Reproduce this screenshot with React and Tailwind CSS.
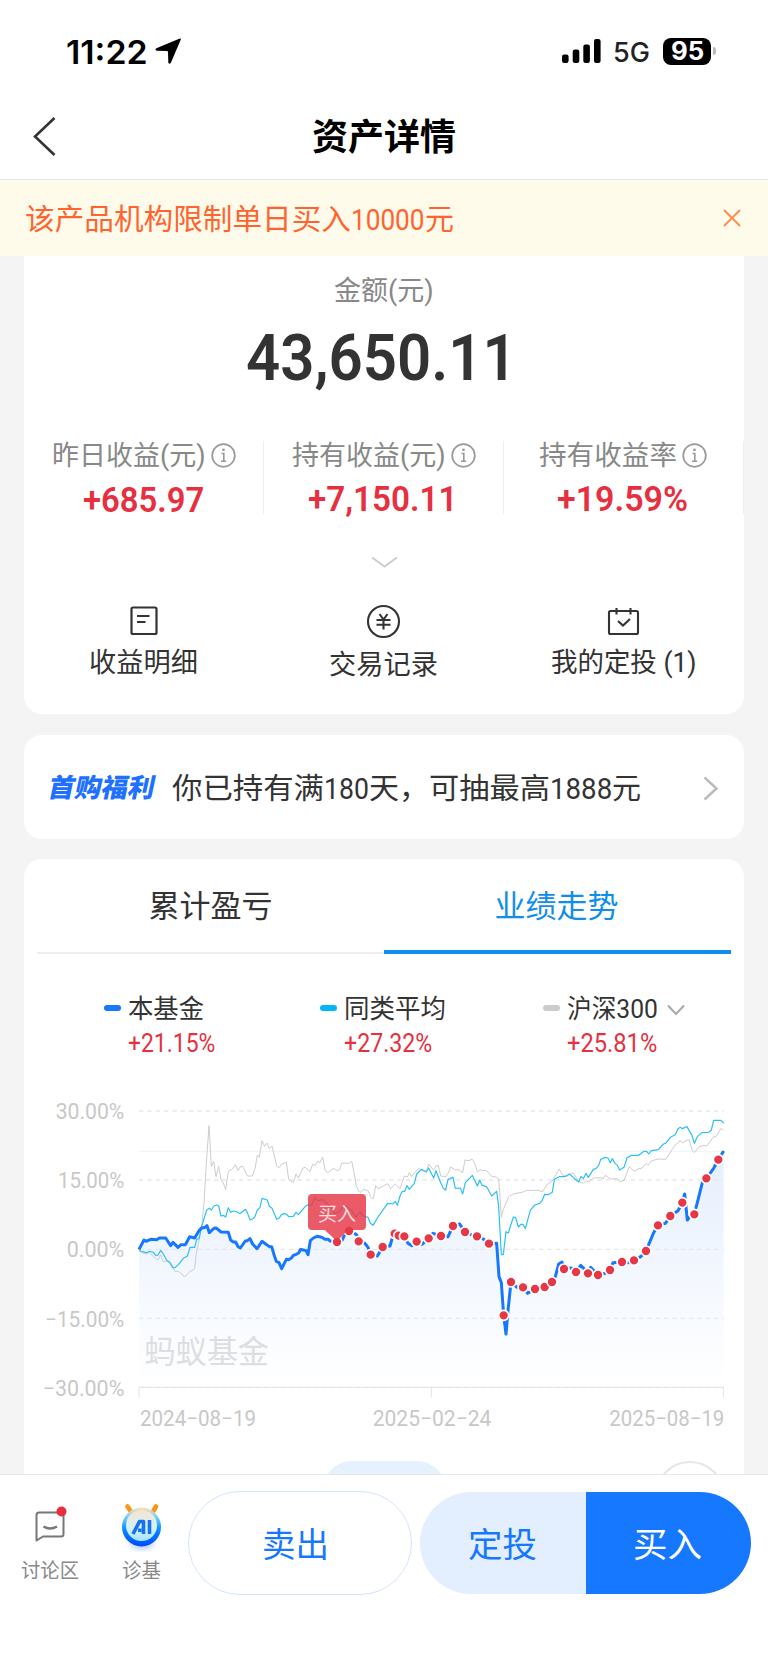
import { useLayoutEffect, useRef } from 'react';

// Text squeezed or stretched horizontally to fill the width of its box.
function Fit({ className = '', children }) {
  const box = useRef(null);
  const inner = useRef(null);
  useLayoutEffect(() => {
    const natural = inner.current.offsetWidth;
    const target = box.current.clientWidth;
    if (natural && target) inner.current.style.transform = `scaleX(${target / natural})`;
  }, []);
  return (
    <span ref={box} className={`block shrink-0 whitespace-nowrap ${className}`}>
      <span ref={inner} className="inline-block origin-left align-top">{children}</span>
    </span>
  );
}

const L = 1104;
const own = [[417,508],[432,480],[438,484],[452,478],[470,479],[478,474],[497,474],[512,497],[519,487],[534,502],[543,494],[556,494],[569,470],[584,474],[597,452],[606,443],[614,443],[621,437],[628,458],[643,444],[650,445],[663,456],[685,457],[692,480],[700,486],[707,486],[714,500],[721,504],[736,483],[742,482],[750,476],[758,492],[771,506],[786,484],[800,494],[808,500],[815,500],[822,524],[829,544],[837,548],[845,566],[859,538],[866,539],[874,534],[880,526],[888,523],[896,519],[902,508],[910,510],[918,512],[924,524],[931,482],[940,474],[951,469],[965,472],[975,478],[985,478],[990,483],[1011,486],[1026,482],[1032,468],[1047,453],[1060,458],[1070,464],[1076,484],[1092,488],[1098,494],[1104,502],[1112,523],
  ...[[28,528],[44,501],[66,498],[74,470],[80,461],[92,467],[109,469],[120,490],[132,497],[146,485],[162,493],[182,475],[195,460],[219,468],[240,470],[255,438],[275,432],[291,456],[310,464],[327,469],[348,478],[363,491],[386,490],[393,590],[400,608],[407,706],[414,762],[420,692],[429,606],[447,622],[465,622],[479,640],[501,627],[530,621],[552,606],[562,590],[572,552],[582,546],[588,567],[610,564],[624,576],[638,556],[650,568],[660,580],[668,562],[690,585],[712,580],[726,570],[735,548],[762,546],[785,548],[798,541],[818,530],[834,513],[857,458],[870,436],[892,430],[907,408],[930,392],[943,368],[950,342],[958,420],[964,412],[979,403],[1003,308],[1015,295],[1037,265],[1042,255],[1051,239],[1067,213]].map(([x, y]) => [x + L, y])];
const peers = [[417,508],[422,514],[440,518],[448,514],[458,516],[468,527],[474,525],[482,511],[490,522],[500,541],[508,546],[518,563],[526,562],[536,553],[550,535],[562,529],[570,502],[584,502],[590,478],[597,476],[605,440],[620,390],[628,385],[634,390],[642,378],[650,375],[656,378],[663,408],[670,406],[677,411],[685,383],[692,397],[700,393],[712,396],[720,401],[736,388],[742,398],[750,420],[758,416],[764,412],[772,390],[780,383],[786,355],[802,360],[808,379],[816,385],[830,418],[838,414],[844,404],[852,401],[859,402],[866,410],[880,409],[888,397],[895,404],[903,395],[916,379],[925,374],[935,375],[945,352],[955,362],[968,359],[978,368],[990,378],[1003,400],[1015,398],[1030,378],[1040,380],[1055,392],[1068,411],[1080,396],[1090,408],
  ...[[0,412],[7,430],[15,436],[30,411],[44,391],[59,370],[74,372],[82,364],[88,376],[96,348],[103,334],[110,334],[117,317],[124,328],[139,310],[146,282],[160,268],[175,276],[182,264],[197,294],[204,272],[218,308],[226,325],[233,330],[240,298],[255,292],[262,325],[277,324],[284,342],[292,308],[313,286],[328,318],[335,300],[342,316],[356,320],[371,348],[386,334],[392,380],[400,524],[406,524],[414,455],[421,459],[436,411],[443,413],[451,441],[458,433],[465,433],[472,446],[487,391],[500,375],[515,370],[523,361],[530,343],[540,344],[553,337],[559,298],[574,290],[590,290],[604,282],[620,296],[632,306],[639,289],[646,296],[654,280],[661,292],[676,268],[684,266],[692,256],[698,238],[712,232],[720,234],[727,248],[733,236],[741,250],[748,256],[755,270],[768,262],[777,234],[790,226],[812,226],[828,214],[836,214],[842,222],[850,212],[871,209],[886,192],[893,190],[907,172],[922,164],[930,146],[937,142],[943,146],[957,140],[965,154],[972,166],[979,190],[988,170],[1002,158],[1022,157],[1030,150],[1037,121],[1059,121],[1067,130]].map(([x, y]) => [x + L, y])];
const index300 = [[417,508],[430,520],[440,522],[448,516],[460,530],[474,540],[482,524],[490,546],[498,543],[512,547],[525,574],[535,574],[554,590],[570,574],[580,570],[584,565],[590,512],[598,478],[605,440],[612,370],[619,250],[627,137],[634,260],[641,244],[648,290],[656,259],[663,299],[670,309],[677,329],[685,274],[698,266],[706,254],[714,272],[721,260],[728,258],[742,288],[757,288],[765,266],[772,225],[778,232],[786,182],[794,199],[801,189],[808,206],[816,198],[830,258],[837,263],[845,252],[859,247],[866,298],[880,308],[888,282],[895,294],[909,264],[916,262],[930,275],[938,253],[946,256],[953,243],[960,248],[968,231],[975,270],[983,278],[1000,265],[1012,272],[1018,270],[1026,249],[1048,250],[1055,243],[1062,278],[1069,318],[1077,335],[1083,337],[1090,328],[1098,330],
  ...[[0,332],[10,354],[16,356],[23,317],[30,326],[44,319],[59,311],[68,326],[82,312],[96,326],[109,288],[118,291],[124,278],[131,290],[139,278],[153,265],[160,272],[175,274],[182,252],[196,270],[204,258],[211,256],[218,288],[234,290],[240,280],[248,261],[262,270],[270,268],[284,278],[291,240],[300,242],[313,238],[320,250],[328,276],[336,270],[356,272],[371,289],[385,291],[392,298],[396,350],[400,412],[407,385],[415,368],[422,350],[436,342],[465,336],[475,331],[512,331],[523,336],[538,312],[552,304],[560,290],[574,267],[582,284],[596,290],[612,278],[620,284],[632,304],[646,310],[654,302],[661,306],[676,294],[698,293],[705,297],[712,286],[727,297],[748,296],[755,305],[768,301],[784,260],[798,274],[812,266],[820,266],[835,250],[841,256],[849,243],[871,237],[893,238],[922,194],[928,191],[936,181],[943,189],[957,180],[964,180],[972,210],[979,218],[994,200],[1008,196],[1016,198],[1037,170],[1044,170],[1059,145],[1067,151]].map(([x, y]) => [x + L, y])];
const buys = [[1047,453],[1076,484],[1112,524],
  ...[[44,501],[80,461],[92,467],[109,469],[146,485],[182,475],[219,468],[255,438],[291,456],[327,469],[363,491],[407,706],[429,606],[465,622],[501,627],[530,621],[552,606],[588,567],[624,576],[660,580],[690,585],[726,570],[762,546],[798,541],[834,513],[870,436],[907,408],[943,368],[979,403],[1015,295],[1051,239]].map(([x, y]) => [x + L, y]), [1011,486]];

const toLine = (pts) => pts.map((p) => p.join(',')).join(' ');

function Chart() {
  return (
    <svg className="block h-[378px] w-[720px] shrink-0" viewBox="72 0 2160 1134" fontFamily="Roboto, 'Noto Sans CJK SC', sans-serif">
      <defs>
        <linearGradient id="area" gradientUnits="userSpaceOnUse" x1="0" y1="213" x2="0" y2="922">
          <stop offset="0" stopColor="#1764e8" stopOpacity="0.11" />
          <stop offset="0.5" stopColor="#1a6cf0" stopOpacity="0.055" />
          <stop offset="1" stopColor="#1677ff" stopOpacity="0" />
        </linearGradient>
      </defs>
      <polygon points={`417,922 ${toLine(own)} 2171,922`} fill="url(#area)" />
      <g stroke="#e6e7ea" strokeWidth="4" strokeDasharray="13 12">
        {[93, 300, 508, 715, 922].map((y) => <line key={y} x1="417" x2="2171" y1={y} y2={y} />)}
      </g>
      <line x1="417" x2="2171" y1="214" y2="214" stroke="#edf3fd" strokeWidth="3" />
      <path d="M417 952V922H2170V952M1294 922V952" fill="none" stroke="#e2e3e5" strokeWidth="3" />
      <g fill="#c8c8c8" fontSize="66" textAnchor="end">
        <text x="373" y="117" textLength="206" lengthAdjust="spacingAndGlyphs">30.00%</text>
        <text x="373" y="325" textLength="199" lengthAdjust="spacingAndGlyphs">15.00%</text>
        <text x="373" y="532" textLength="173" lengthAdjust="spacingAndGlyphs">0.00%</text>
        <text x="373" y="740" textLength="238" lengthAdjust="spacingAndGlyphs">−15.00%</text>
        <text x="373" y="948" textLength="245" lengthAdjust="spacingAndGlyphs">−30.00%</text>
      </g>
      <g fill="#c8c8c8" fontSize="66">
        <text x="420" y="1038" textLength="348" lengthAdjust="spacingAndGlyphs">2024−08−19</text>
        <text x="1118" y="1038" textLength="356" lengthAdjust="spacingAndGlyphs">2025−02−24</text>
        <text x="1828" y="1038" textLength="345" lengthAdjust="spacingAndGlyphs">2025−08−19</text>
      </g>
      <text x="433" y="850" fontSize="94" fill="#dcdee1" textLength="374" lengthAdjust="spacingAndGlyphs">蚂蚁基金</text>
      <g fill="none" strokeLinejoin="round">
        <polyline points={toLine(index300)} stroke="#cdcdcd" strokeWidth="3" />
        <polyline points={toLine(peers)} stroke="#2cc0f7" strokeWidth="3.6" />
        <polyline points={toLine(own)} stroke="#1677ff" strokeWidth="9" />
      </g>
      <g fill="#e63746" stroke="#ffffff" strokeWidth="5">
        {buys.map(([x, y]) => <circle key={x} cx={x} cy={y} r="15" />)}
      </g>
      <path d="M936 342H1086Q1098 342 1098 354V438Q1098 450 1086 450H1044L1011 484L974 450H936Q924 450 924 438V354Q924 342 936 342Z" fill="#e73746" fillOpacity="0.82" />
      <text x="1011" y="423" fontSize="57" fill="#ffdfe2" textAnchor="middle">买入</text>
    </svg>
  );
}

function Info() {
  return (
    <svg className="mt-[2px] size-[25px] shrink-0" viewBox="0 0 25 25" fill="none" stroke="#999" strokeWidth="1.7">
      <circle cx="12.5" cy="12.5" r="11.3" />
      <path d="M10.5 10.5H12.8V18M10 18.2H15.2" strokeWidth="1.6" />
      <circle cx="12.5" cy="6.8" r="1.4" fill="#999" stroke="none" />
    </svg>
  );
}

function Stat({ label, labelW, value, valueW, pad, lower }) {
  return (
    <div className="flex h-[73px] w-60 flex-col items-center border-r border-[#eeeeee]">
      <div className={`flex h-[27px] items-center ${pad}`}>
        <Fit className={`mt-[3px] text-[27px] leading-[27px] text-[#888888] ${labelW}`}>{label}</Fit>
        <Info />
      </div>
      <Fit className={`text-[35px] leading-[38px] font-semibold text-[#e62f3f] ${lower} ${valueW}`}>{value}</Fit>
    </div>
  );
}

function Action({ icon, label, width, gap }) {
  return (
    <div className="flex w-60 flex-col items-center">
      <div className="flex h-9 items-center">{icon}</div>
      <Fit className={`-ml-[1px] text-[27px] leading-[30px] text-[#333333] ${gap} ${width}`}>{label}</Fit>
    </div>
  );
}

function Legend({ color, label, labelW, value, valueW, left, arrow }) {
  return (
    <div className={`flex ${left}`}>
      <span className={`mt-[13px] mr-[7px] h-[6px] w-[17px] rounded-[3px] ${color}`} />
      <div>
        <div className="flex h-[34px] items-center">
          <Fit className={`text-[26px] leading-[34px] text-[#333333] ${labelW}`}>{label}</Fit>
          {arrow && (
            <svg className="mt-[2px] ml-[9px] h-3 w-[18px]" viewBox="0 0 18 12" fill="none" stroke="#aaaaaa" strokeWidth="2">
              <path d="M1 1.5L9 10L17 1.5" />
            </svg>
          )}
        </div>
        <Fit className={`mt-[2px] text-[25px] leading-[32px] text-[#e62f3f] ${valueW}`}>{value}</Fit>
      </div>
    </div>
  );
}

export default function App() {
  return (
    <div className="flex h-[1663px] w-[768px] flex-col overflow-hidden bg-[#f4f4f4] font-[Roboto,'Noto_Sans_CJK_SC',sans-serif]">
      <header className="shrink-0 bg-white">
        <div className="flex h-[102px] items-center pl-[66px] pr-[52px]">
          <Fit className="mt-px w-[82px] font-[Inter,sans-serif] text-[33px] leading-[40px] font-semibold text-black">11:22</Fit>
          <svg className="ml-[7px] size-[26px]" viewBox="0 0 26 26"><path d="M24.2.7Q26.6-.3 25.6 2L16 24.4Q14.500 27 13.300 24.400L13 14.200Q13 13 11.800 13L1.800 12.800Q-.8 11.800 1.400 10.200Z" fill="#000" /></svg>
          <svg className="ml-auto h-[24px] w-[39px]" viewBox="0 0 39 24"><rect y="15.500" width="6.600" height="8.500" rx="2.200" /><rect x="10.700" y="10.500" width="6.600" height="13.500" rx="2.200" /><rect x="21.300" y="5.500" width="6.600" height="18.500" rx="2.200" /><rect x="32" y="0" width="6.600" height="24" rx="2.200" /></svg>
          <Fit className="mt-[3px] ml-[12px] w-[37px] font-[Inter,sans-serif] text-[27px] leading-[40px] font-medium text-[#222222]">5G</Fit>
          <div className="ml-[13px] flex h-[27px] w-[48px] items-center justify-center rounded-[8px] bg-black">
            <Fit className="w-[33px] font-[Inter,sans-serif] text-[25px] leading-[27px] font-bold text-white">95</Fit>
          </div>
          <span className="ml-[2px] h-[8px] w-[3px] rounded-r-full bg-[#bbbbbb]" />
        </div>
        <div className="flex h-[78px] items-start border-b border-[#e8e8e8] pt-[14px]">
          <svg className="ml-[33px] h-10 w-[23px]" viewBox="0 0 23 40" fill="none" stroke="#333333" strokeWidth="2.600"><path d="M21.500 2L2 20.500L21.500 39" /></svg>
          <Fit className="ml-[256px] w-[144px] text-[36px] leading-[44px] font-semibold text-black">资产详情</Fit>
        </div>
      </header>
      <div className="flex h-[76px] shrink-0 items-center bg-[#fefbea] pl-[25px] text-[29px] leading-[40px] text-[#ff6430]">
        <Fit className="mt-[4px] w-[326px]">该产品机构限制单日买入</Fit>
        <Fit className="mt-[4px] w-[74px]">10000</Fit>
        <Fit className="mt-[4px] w-[29px]">元</Fit>
        <svg className="ml-[269px] size-[18px]" viewBox="0 0 18 18" stroke="#ff8a50" strokeWidth="1.800"><path d="M1 1L17 17M17 1L1 17" /></svg>
      </div>

      <main className="flex h-[1218px] shrink-0 flex-col gap-[21px] px-6">
        <section className="flex h-[458px] shrink-0 flex-col rounded-b-[18px] bg-white">
          <Fit className="mt-[15px] ml-[310px] w-[100px] text-[27px] leading-[40px] text-[#888888]">金额(元)</Fit>
          <Fit className="mt-[17px] ml-[222px] w-[271px] text-[65px] leading-[60px] font-semibold text-[#333333]">43,650.11</Fit>
          <div className="mt-[53px] flex">
            <Stat label="昨日收益(元)" labelW="mr-[5px] w-[154px]" value="+685.97" valueW="w-[121px]" pad="-mr-[1px]" lower="mt-[14px] -ml-[1px]" />
            <Stat label="持有收益(元)" labelW="mr-[5px] w-[154px]" value="+7,150.11" valueW="w-[149px]" pad="-mr-[1px]" lower="mt-[13px] -ml-[2px]" />
            <Stat label="持有收益率" labelW="mr-[5px] w-[138px]" value="+19.59%" valueW="w-[131px]" pad="mr-[1px]" lower="mt-[13px] -ml-[3px]" />
          </div>
          <svg className="mt-[42px] ml-[347px] h-3 w-[27px]" viewBox="0 0 27 12" fill="none" stroke="#cccccc" strokeWidth="2"><path d="M1 1.500L13.500 10.500L26 1.500" /></svg>
          <div className="mt-[35px] flex">
            <Action width="w-[109px]" gap="mt-[9px]" label="收益明细" icon={
              <svg className="size-9" viewBox="0 0 36 36" fill="none" stroke="#333333" strokeWidth="2.200"><rect x="5.500" y="4.500" width="25" height="26.500" rx="1.500" /><path d="M11 13H23.500M11 19H19.500" /></svg>} />
            <Action width="w-[109px]" gap="mt-[11px]" label="交易记录" icon={
              <svg className="size-9" viewBox="0 0 36 36" fill="none" stroke="#333333" strokeWidth="2.100"><circle cx="17.500" cy="18.500" r="15.500" /><path d="M13.500 11L17.500 16.500L21.500 11M17.500 16.500V26.500M10.500 17H24.500M10.500 21.800H24.500" /></svg>} />
            <Action width="w-[146px]" gap="mt-[9px]" label="我的定投 (1)" icon={
              <svg className="size-9" viewBox="0 0 36 36" fill="none" stroke="#333333" strokeWidth="2.100"><rect x="3" y="8" width="29" height="23" rx="1.500" /><path d="M10.500 5V11.500M24.500 5V11.500M12 18L17 22.500L24 16" /></svg>} />
          </div>
        </section>

        <section className="flex h-[104px] shrink-0 items-center rounded-[18px] bg-white pl-[25px]">
          <Fit className="mt-[2px] w-[106px] -skew-x-12 text-[26px] leading-[40px] font-black text-[#2070ff]">首购福利</Fit>
          <div className="mt-[4px] ml-[17px] flex text-[29px] leading-[40px] text-[#333333]">
            <Fit className="w-[152px]">你已持有满</Fit>
            <Fit className="w-[45px]">180</Fit>
            <Fit className="w-[60px]">天，</Fit>
            <Fit className="w-[121px]">可抽最高</Fit>
            <Fit className="w-[62px]">1888</Fit>
            <Fit className="w-[29px]">元</Fit>
          </div>
          <svg className="mt-[3px] ml-[62px] h-[25px] w-4" viewBox="0 0 16 25" fill="none" stroke="#bbbbbb" strokeWidth="2.500"><path d="M1.500 1.500L13.500 12.500L1.500 23.500" /></svg>
        </section>

        <section className="-mt-px flex h-[615px] shrink-0 flex-col rounded-t-[18px] bg-white">
          <div className="mx-[13px] flex h-[95px] shrink-0 text-[31px] leading-[44px]">
            <div className="flex w-1/2 justify-center border-b-2 border-[#eeeeee] pt-[26px]">
              <Fit className="w-[124px] text-[#333333]">累计盈亏</Fit>
            </div>
            <div className="flex w-1/2 justify-center border-b-4 border-[#108ee9] pt-[26px]">
              <Fit className="-ml-[2px] w-[124px] text-[#108ee9]">业绩走势</Fit>
            </div>
          </div>
          <div className="flex h-[126px] shrink-0 pt-[38px]">
            <Legend left="ml-[80px] w-[216px]" color="bg-[#1677ff]" label="本基金" labelW="w-[76px]" value="+21.15%" valueW="w-[87px]" />
            <Legend left="w-[223px]" color="bg-[#00b8f5]" label="同类平均" labelW="w-[102px]" value="+27.32%" valueW="w-[88px]" />
            <Legend left="" color="bg-[#cccccc]" label="沪深300" labelW="w-[91px]" value="+25.81%" valueW="w-[90px]" arrow />
          </div>
          <Chart />
          <div className="flex h-4 items-start overflow-hidden pt-[3px]">
            <span className="ml-[299px] h-[58px] w-[123px] shrink-0 rounded-full bg-[#e6f1fe]" />
            <span className="ml-[209px] size-[70px] shrink-0 rounded-full border-2 border-[#e6e6e6]" />
          </div>
        </section>
      </main>

      <footer className="flex h-[189px] shrink-0 items-start border-t border-[#e8e8e8] bg-white pt-[16px]">
        <div className="ml-[20px] flex w-[60px] flex-col items-center pt-[13px]">
          <svg className="h-10 w-9" viewBox="0 0 36 40" fill="none" stroke="#777777" strokeWidth="2"><path d="M4.500 36.500V11Q4.500 8.500 7 8.500H29Q31.500 8.500 31.500 11V30Q31.500 32.500 29 32.500H11Z" strokeLinejoin="round" /><path d="M11.500 22.500Q18 26.500 25 22.500" strokeWidth="2.400" /><circle cx="29.500" cy="7.500" r="5" fill="#e62f3f" stroke="none" /></svg>
          <Fit className="mt-[13px] w-[58px] text-[20px] leading-[28px] text-[#888888]">讨论区</Fit>
        </div>
        <div className="ml-[38px] flex w-[48px] flex-col items-center pt-[11px]">
          <svg className="h-[52px] w-12" viewBox="0 0 48 52">
            <defs>
              <linearGradient id="rim" x1="0" y1="0" x2="0" y2="1"><stop offset="0" stopColor="#ffe3b8" /><stop offset="0.300" stopColor="#5cc8ff" /><stop offset="0.550" stopColor="#0a8cff" /><stop offset="1" stopColor="#0048ff" /></linearGradient>
              <linearGradient id="face" x1="0" y1="0" x2="0" y2="1"><stop offset="0" stopColor="#f6e4cd" /><stop offset="0.600" stopColor="#d5f2fb" /><stop offset="1" stopColor="#9fe4ff" /></linearGradient>
              <radialGradient id="glow"><stop offset="0" stopColor="#a9c4ff" /><stop offset="1" stopColor="#ffffff" /></radialGradient>
            </defs>
            <ellipse cx="24" cy="42" rx="16" ry="9" fill="url(#glow)" />
            <path d="M9.500 4.500L13.500 10.500M38 4.500L34.500 10.500" stroke="#ff9412" strokeWidth="4.600" strokeLinecap="round" />
            <circle cx="23.500" cy="25" r="19.500" fill="url(#rim)" />
            <circle cx="23.500" cy="23.500" r="15.500" fill="url(#face)" />
            <path d="M15 32L21.500 19.500H25.500V32M20 28.200H23.500M31.500 18V32" fill="none" stroke="#1672f0" strokeWidth="3.600" strokeLinejoin="round" />
          </svg>
          <Fit className="mt-[3px] -ml-[1px] w-[39px] text-[20px] leading-[28px] text-[#888888]">诊基</Fit>
        </div>
        <div className="ml-[22px] flex h-[104px] w-[224px] items-center justify-center rounded-full border border-[#d3e4ff] pr-[9px]">
          <Fit className="mt-[4px] w-[67px] text-[34px] leading-[50px] text-[#1677ff]">卖出</Fit>
        </div>
        <div className="mt-px ml-[8px] flex h-[102px] w-[331px] overflow-hidden rounded-full text-[34px] leading-[50px]">
          <div className="flex w-[166px] items-center justify-center bg-[#e3eeff]"><Fit className="mt-[4px] -ml-[2px] w-[69px] text-[#1677ff]">定投</Fit></div>
          <div className="flex w-[165px] items-center justify-center bg-[#1677ff]"><Fit className="mt-[4px] -ml-[2px] w-[69px] text-white">买入</Fit></div>
        </div>
      </footer>
    </div>
  );
}
